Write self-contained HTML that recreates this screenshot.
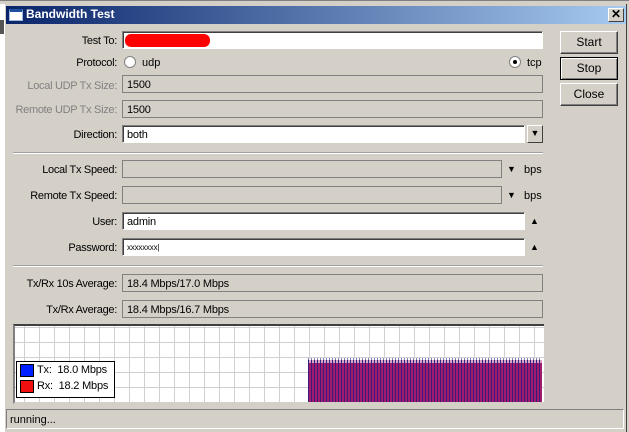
<!DOCTYPE html>
<html><head><style>
*{margin:0;padding:0;box-sizing:border-box}
body{width:629px;height:432px;background:#d4d0c8;font-family:"Liberation Sans",sans-serif;font-size:11px;color:#000;position:relative;overflow:hidden}
.a{position:absolute}
.lbl{position:absolute;right:512px;text-align:right;white-space:nowrap;letter-spacing:-0.3px}
.dis{color:#808080}
.f{position:absolute;height:18px;border:1px solid #808080;border-right-color:#fff;border-bottom-color:#fff;box-shadow:inset 1px 1px 0 #404040;padding:2px 0 0 4px;background:#fff;white-space:nowrap;letter-spacing:-0.2px}
.g{background:#d4d0c8;border:1px solid #808080;box-shadow:none}
.btn{position:absolute;left:560px;width:58px;height:23px;border:1px solid #fff;border-right-color:#404040;border-bottom-color:#404040;box-shadow:inset -1px -1px 0 #808080;text-align:center;line-height:20px;font-size:12px}
.sep{position:absolute;left:13px;width:530px;height:2px;border-top:1px solid #a0a0a0;border-bottom:1px solid #fff}
</style></head><body>
<div class="a" style="left:0;top:0;width:629px;height:4px;background:#d4d0c8;border-top:1px solid #808080"></div>
<div class="a" style="left:0;top:4px;width:4px;height:428px;background:#fff"></div>
<div class="a" style="left:0;top:20px;width:4px;height:14px;background:#555"></div>
<div class="a" style="left:4px;top:4px;width:623px;height:428px;border-left:1px solid #fff;border-right:1px solid #404040"></div>
<div class="a" style="left:6px;top:6px;width:620px;height:18px;background:linear-gradient(to right,#0a246a,#a6caf0)"></div>
<div class="a" style="left:9px;top:9px;width:14px;height:12px;background:#fff;border:1px solid #a0b8e0;border-top:3px solid #2050a0"></div>
<div class="a" style="left:26px;top:7px;color:#fff;font-weight:bold;font-size:12px">Bandwidth Test</div>
<div class="a" style="left:608px;top:8px;width:16px;height:14px;background:#d4d0c8;border:1px solid #fff;border-right-color:#404040;border-bottom-color:#404040;text-align:center;line-height:11px;font-size:12px;font-weight:bold">✕</div>

<div class="lbl" style="top:35px">Test To:</div>
<div class="f" style="left:122px;top:31px;width:421px"><span style="display:inline-block;width:85px;height:13px;background:#f00;border-radius:6px;margin-left:-2px"></span></div>
<div class="lbl" style="top:57px">Protocol:</div>
<div class="a" style="left:124px;top:56px;width:12px;height:12px;border-radius:50%;background:#fff;border:1px solid #808080"></div>
<div class="a" style="left:142px;top:57px">udp</div>
<div class="a" style="left:509px;top:56px;width:12px;height:12px;border-radius:50%;background:#fff;border:1px solid #808080"><div style="margin:3px;width:4px;height:4px;background:#000;border-radius:50%"></div></div>
<div class="a" style="left:527px;top:57px">tcp</div>
<div class="lbl dis" style="top:80px">Local UDP Tx Size:</div>
<div class="f g" style="left:122px;top:75px;width:421px;padding-top:3px">1500</div>
<div class="lbl dis" style="top:104px">Remote UDP Tx Size:</div>
<div class="f g" style="left:122px;top:100px;width:421px;padding-top:3px">1500</div>
<div class="lbl" style="top:129px">Direction:</div>
<div class="f" style="left:122px;top:125px;width:403px;padding-top:3px">both</div>
<div class="a" style="left:527px;top:125px;width:16px;height:18px;border:1px solid #fff;border-right-color:#404040;border-bottom-color:#404040;text-align:center;font-size:9px;line-height:15px">▼</div>
<div class="sep" style="top:152px"></div>

<div class="lbl" style="top:164px">Local Tx Speed:</div>
<div class="f g" style="left:122px;top:160px;width:380px"></div>
<div class="a" style="left:507px;top:164px;font-size:9px">▼</div><div class="a" style="left:524px;top:164px">bps</div>
<div class="lbl" style="top:190px">Remote Tx Speed:</div>
<div class="f g" style="left:122px;top:186px;width:380px"></div>
<div class="a" style="left:507px;top:190px;font-size:9px">▼</div><div class="a" style="left:524px;top:190px">bps</div>
<div class="lbl" style="top:216px">User:</div>
<div class="f" style="left:122px;top:212px;width:403px;padding-top:3px">admin</div>
<div class="a" style="left:530px;top:216px;font-size:9px">▲</div>
<div class="lbl" style="top:242px">Password:</div>
<div class="f" style="left:122px;top:238px;width:403px;font-size:8px;padding-top:4px">xxxxxxxx|</div>
<div class="a" style="left:530px;top:242px;font-size:9px">▲</div>
<div class="sep" style="top:265px"></div>

<div class="lbl" style="top:278px">Tx/Rx 10s Average:</div>
<div class="f g" style="left:122px;top:274px;width:421px;padding-top:3px">18.4 Mbps/17.0 Mbps</div>
<div class="lbl" style="top:304px">Tx/Rx Average:</div>
<div class="f g" style="left:122px;top:300px;width:421px;padding-top:3px">18.4 Mbps/16.7 Mbps</div>

<div class="a" style="left:13px;top:324px;width:531px;height:80px;background-color:#fff;background-image:linear-gradient(to right,#d0d0d0 1px,transparent 1px),linear-gradient(to bottom,#d0d0d0 1px,transparent 1px);background-size:15px 15px,15px 15px;background-position:9px 0,0 1px;border-top:2px solid #404040;border-left:2px solid #808080;border-bottom:2px solid #d4d0c8"></div>
<div class="a" style="left:308px;top:360px;width:234px;height:42px;background:repeating-linear-gradient(to right,#3a1a7a 0 1px,#a01a70 1px 3px)"></div>
<div class="a" style="left:308px;top:358px;width:234px;height:5px;background:repeating-linear-gradient(to right,#2a2a90 0 1px,#fff 1px 3px);opacity:.6"></div>
<div class="a" style="left:16px;top:361px;width:99px;height:37px;background:#fff;border:1px solid #000"></div>
<div class="a" style="left:20px;top:364px;width:14px;height:13px;background:#0020ff;border:1px solid #000"></div>
<div class="a" style="left:20px;top:380px;width:14px;height:13px;background:#f01010;border:1px solid #000"></div>
<div class="a" style="left:37px;top:364px;font-size:11px;letter-spacing:-0.2px">Tx:&nbsp; 18.0 Mbps</div>
<div class="a" style="left:37px;top:380px;font-size:11px;letter-spacing:-0.2px">Rx:&nbsp; 18.2 Mbps</div>

<div class="a" style="left:6px;top:409px;width:618px;height:20px;border:1px solid #808080;border-right-color:#fff;border-bottom-color:#fff;padding:4px 0 0 3px">running...</div>

<div class="btn" style="top:31px">Start</div>
<div class="btn" style="top:57px;border:1px solid #000;box-shadow:inset 1px 1px 0 #fff,inset -1px -1px 0 #808080">Stop</div>
<div class="btn" style="top:83px">Close</div>
</body></html>
